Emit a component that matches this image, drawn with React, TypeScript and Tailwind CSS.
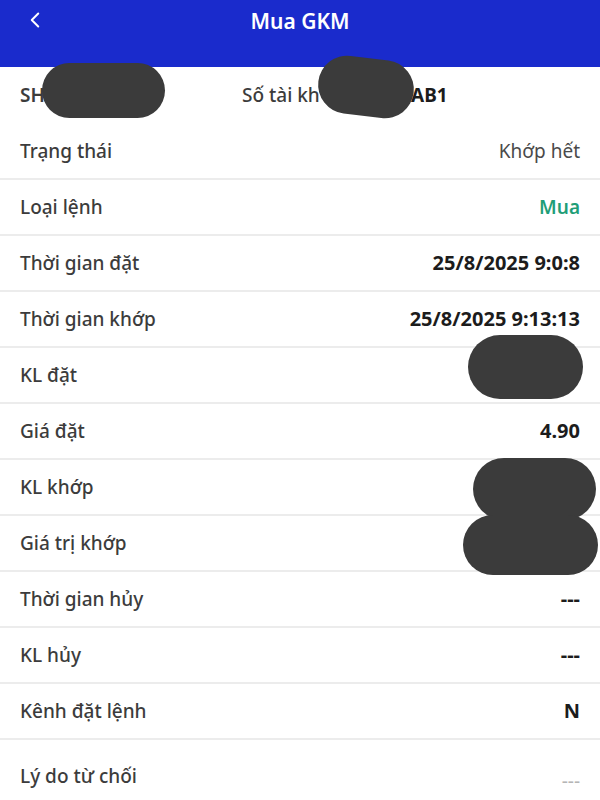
import { ChevronLeft } from "lucide-react";

type Row = {
  label: string;
  value: string;
  tone?: "muted" | "green" | "bold" | "faint";
};

const rows: Row[] = [
  { label: "Trạng thái", value: "Khớp hết", tone: "muted" },
  { label: "Loại lệnh", value: "Mua", tone: "green" },
  { label: "Thời gian đặt", value: "25/8/2025 9:0:8" },
  { label: "Thời gian khớp", value: "25/8/2025 9:13:13" },
  { label: "KL đặt", value: "" },
  { label: "Giá đặt", value: "4.90" },
  { label: "KL khớp", value: "" },
  { label: "Giá trị khớp", value: "" },
  { label: "Thời gian hủy", value: "---" },
  { label: "KL hủy", value: "---" },
  { label: "Kênh đặt lệnh", value: "N" },
];

function valueClass(tone?: Row["tone"]) {
  if (tone === "muted") return "text-[#4a4a4a] font-normal text-[19px]";
  if (tone === "green") return "text-[#1f9e78] font-semibold text-[19px]";
  if (tone === "faint") return "text-[#b5b5b5] font-normal";
  return "text-[#1c1c1c] font-bold text-[20px]";
}

export default function App() {
  return (
    <div
      className="relative w-[600px] h-[800px] overflow-hidden bg-white"
      style={{ fontFamily: '"Noto Sans", "Open Sans", sans-serif' }}
    >
      {/* HEADER */}
      <div className="h-[67px] bg-[#1a2bcc] flex items-start pt-[3px] px-[22px]">
        <ChevronLeft size={26} strokeWidth={1.8} className="text-white mt-[4px]" />
        <div className="flex-1 text-center text-white text-[21px] font-semibold leading-[36px] pr-[26px]">
          Mua GKM
        </div>
      </div>

      {/* ACCOUNT ROW */}
      <div className="h-[57px] flex items-center px-5 text-[19px] text-[#3c3c3c]">
        <span className="w-[222px] font-semibold">SH</span>
        <span className="w-[169px] font-medium">Số tài kh</span>
        <span className="font-bold text-[#1c1c1c]">AB1</span>
      </div>

      {/* ROWS */}
      <div>
        {rows.map((row, index) => (
          <div
            key={index}
            className="h-[56px] flex items-center justify-between px-5 border-b-2 border-[#ececec] text-[19px]"
          >
            <span className="text-[#3c3c3c] font-medium">{row.label}</span>
            <span className={valueClass(row.tone)}>{row.value}</span>
          </div>
        ))}

        <div className="h-[72px] flex items-center justify-between px-5 text-[19px]">
          <span className="text-[#3c3c3c] font-medium">Lý do từ chối</span>
          <span className="text-[#b5b5b5] mt-[10px]">---</span>
        </div>
      </div>

      {/* REDACTION BLOBS */}
      <div className="absolute left-[42px] top-[63px] w-[123px] h-[55px] rounded-[28px] bg-[#3b3b3b]" />
      <div className="absolute left-[318px] top-[58px] w-[96px] h-[58px] rounded-[29px] bg-[#3b3b3b] rotate-[7deg]" />
      <div className="absolute left-[468px] top-[335px] w-[115px] h-[64px] rounded-[32px] bg-[#3b3b3b]" />
      <div className="absolute left-[473px] top-[458px] w-[123px] h-[62px] rounded-[31px] bg-[#3b3b3b]" />
      <div className="absolute left-[463px] top-[515px] w-[135px] h-[60px] rounded-[30px] bg-[#3b3b3b]" />
    </div>
  );
}
